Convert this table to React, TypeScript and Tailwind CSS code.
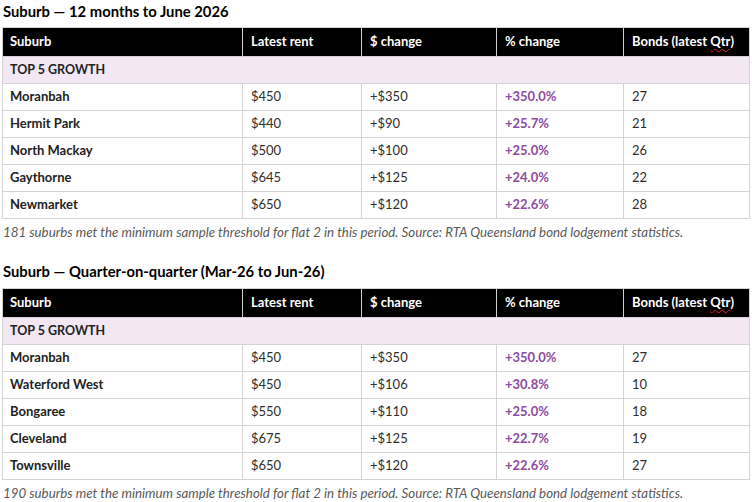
import React from "react";

type Row = { name: string; rent: string; chg: string; pct: string; bonds: string };

const t1: Row[] = [
  { name: "Moranbah", rent: "$450", chg: "+$350", pct: "+350.0%", bonds: "27" },
  { name: "Hermit Park", rent: "$440", chg: "+$90", pct: "+25.7%", bonds: "21" },
  { name: "North Mackay", rent: "$500", chg: "+$100", pct: "+25.0%", bonds: "26" },
  { name: "Gaythorne", rent: "$645", chg: "+$125", pct: "+24.0%", bonds: "22" },
  { name: "Newmarket", rent: "$650", chg: "+$120", pct: "+22.6%", bonds: "28" },
];

const t2: Row[] = [
  { name: "Moranbah", rent: "$450", chg: "+$350", pct: "+350.0%", bonds: "27" },
  { name: "Waterford West", rent: "$450", chg: "+$106", pct: "+30.8%", bonds: "10" },
  { name: "Bongaree", rent: "$550", chg: "+$110", pct: "+25.0%", bonds: "18" },
  { name: "Cleveland", rent: "$675", chg: "+$125", pct: "+22.7%", bonds: "19" },
  { name: "Townsville", rent: "$650", chg: "+$120", pct: "+22.6%", bonds: "27" },
];

const cols = "grid grid-cols-[239px_119px_135px_127px_128px]";

function Table({ rows }: { rows: Row[] }) {
  return (
    <div className="w-[748px] border border-[#d4d4d4]">
      <div className={`${cols} h-[28px] bg-black text-white font-bold text-[13px]`}>
        <div className="flex items-center pl-[7px]">Suburb</div>
        <div className="flex items-center pl-[8px] border-l border-[#d0d0d0]">Latest rent</div>
        <div className="flex items-center pl-[8px] border-l border-[#d0d0d0]">$ change</div>
        <div className="flex items-center pl-[8px] border-l border-[#d0d0d0]">% change</div>
        <div className="flex items-center pl-[8px] border-l border-[#d0d0d0]">
          Bonds (latest&nbsp;<span className="underline decoration-wavy decoration-[#e02020] decoration-1 underline-offset-[2px]">Qtr</span>)
        </div>
      </div>
      <div className="h-[27px] bg-[#f2e7f3] flex items-center pl-[7px] text-[12.5px] font-bold text-[#222] border-t border-[#d4d4d4]">
        TOP 5 GROWTH
      </div>
      {rows.map((r) => (
        <div key={r.name} className={`${cols} h-[27px] text-[13px] text-[#2e2e2e] border-t border-[#d4d4d4]`}>
          <div className="flex items-center pl-[7px] font-bold text-[#222]">{r.name}</div>
          <div className="flex items-center pl-[8px] border-l border-[#d4d4d4]">{r.rent}</div>
          <div className="flex items-center pl-[8px] border-l border-[#d4d4d4]">{r.chg}</div>
          <div className="flex items-center pl-[8px] border-l border-[#d4d4d4] font-bold text-[#8e4a9f]">{r.pct}</div>
          <div className="flex items-center pl-[8px] border-l border-[#d4d4d4]">{r.bonds}</div>
        </div>
      ))}
    </div>
  );
}

export default function App() {
  return (
    <div className="w-[752px] h-[502px] bg-white pl-[2px] overflow-hidden" style={{ fontFamily: "Lato, 'Open Sans', sans-serif" }}>
      <div className="h-[20px] pt-[1px] pl-[1px] text-[14.8px] font-bold text-black leading-[20px]">Suburb — 12 months to June 2026</div>
      <div className="mt-[7px]">
        <Table rows={t1} />
      </div>
      <div className="h-[27px] pl-[1px] flex items-center text-[13.3px] italic text-[#595959]">
        181 suburbs met the minimum sample threshold for flat 2 in this period. Source: RTA Queensland bond lodgement statistics.
      </div>
      <div className="mt-[15px] h-[20px] pl-[1px] text-[14.8px] font-bold text-black leading-[20px]">Suburb — Quarter-on-quarter (Mar-26 to Jun-26)</div>
      <div className="mt-[7px]">
        <Table rows={t2} />
      </div>
      <div className="h-[27px] pl-[1px] flex items-center text-[13.3px] italic text-[#595959]">
        190 suburbs met the minimum sample threshold for flat 2 in this period. Source: RTA Queensland bond lodgement statistics.
      </div>
    </div>
  );
}
